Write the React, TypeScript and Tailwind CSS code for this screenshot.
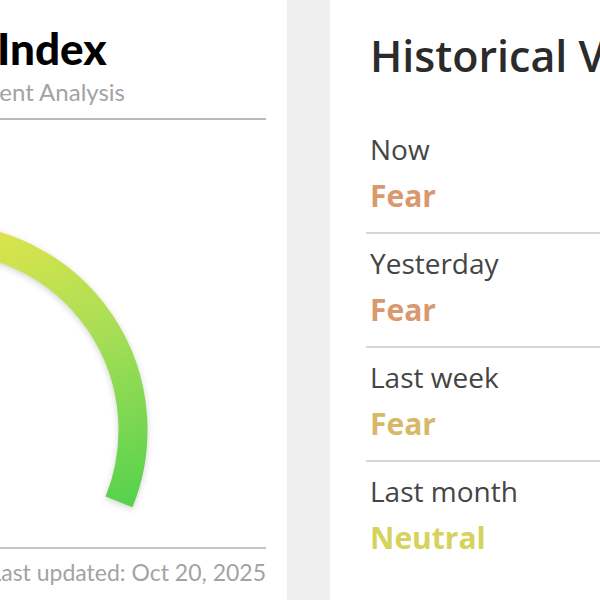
import React from "react";

const history = [
  { label: "Now", value: "Fear", color: "text-[#d9986e]" },
  { label: "Yesterday", value: "Fear", color: "text-[#d9986e]" },
  { label: "Last week", value: "Fear", color: "text-[#d6b868]" },
  { label: "Last month", value: "Neutral", color: "text-[#d5d35c]" },
];

function Gauge() {
  // arc centre sits left of the visible area, only the right half shows
  const cx = 193;
  const cy = 310;
  const r = 192;
  const a = (22 * Math.PI) / 180;
  const sx = cx - r * Math.cos(a);
  const ex = cx + r * Math.cos(a);
  const y = cy + r * Math.sin(a);
  return (
    <svg width="518" height="427" className="block shrink-0" style={{ filter: "drop-shadow(0 2px 3px rgba(0,0,0,0.18))" }}>
      <defs>
        <linearGradient id="g" gradientUnits="userSpaceOnUse" x1="252" y1="105" x2="345" y2="390">
          <stop offset="0" stopColor="#dfe44b" />
          <stop offset="0.45" stopColor="#a7de55" />
          <stop offset="1" stopColor="#58d24e" />
        </linearGradient>
      </defs>
      <path
        d={`M ${sx} ${y} A ${r} ${r} 0 1 1 ${ex} ${y}`}
        fill="none"
        stroke="url(#g)"
        strokeWidth="29"
      />
    </svg>
  );
}

export default function App() {
  return (
    <div className="w-[600px] h-[600px] overflow-hidden bg-[#efefef] flex">
      {/* Left card: gauge */}
      <div className="w-[560px] ml-[-273px] shrink-0 h-full bg-white px-[21px] flex flex-col font-['Lato',sans-serif]">
        <h1 className="pt-[22px] ml-[-19px] text-[44px] leading-[52px] font-black text-black whitespace-nowrap">
          Fear &amp; Greed Index
        </h1>
        <p className="mt-[3px] text-[24px] leading-[30px] text-[#a3a3a3] whitespace-nowrap text-right pr-[141px]">
          Market Sentiment Analysis
        </p>
        <div className="mt-[11px] h-[2px] bg-[#b9b9b9]" />
        <Gauge />
        <div className="h-[2px] bg-[#c4c4c4]" />
        <p className="mt-[8px] text-[23px] leading-[30px] text-[#a3a3a3] text-right whitespace-nowrap">
          Last updated: Oct 20, 2025
        </p>
      </div>

      <div className="w-[43px] shrink-0" />

      {/* Right card: history */}
      <div className="w-[400px] shrink-0 h-full bg-white pl-[40px] font-['Open_Sans',sans-serif]">
        <h2 className="pt-[28px] text-[43px] leading-[56px] font-semibold text-[#2b2b2b] whitespace-nowrap">
          Historical Values
        </h2>
        <div className="mt-[48px] ml-[-4px]">
          {history.map((h, i) => (
            <div key={h.label} className={`pl-[4px] ${i === 0 ? "" : "pt-[12px]"} pb-[18px] ${i < history.length - 1 ? "border-b-2 border-[#d6d6d6]" : ""}`}>
              <div className="text-[28px] leading-[34px] text-[#454545]">{h.label}</div>
              <div className={`mt-[12px] text-[30px] leading-[36px] font-bold ${h.color}`}>{h.value}</div>
            </div>
          ))}
        </div>
      </div>
    </div>
  );
}
